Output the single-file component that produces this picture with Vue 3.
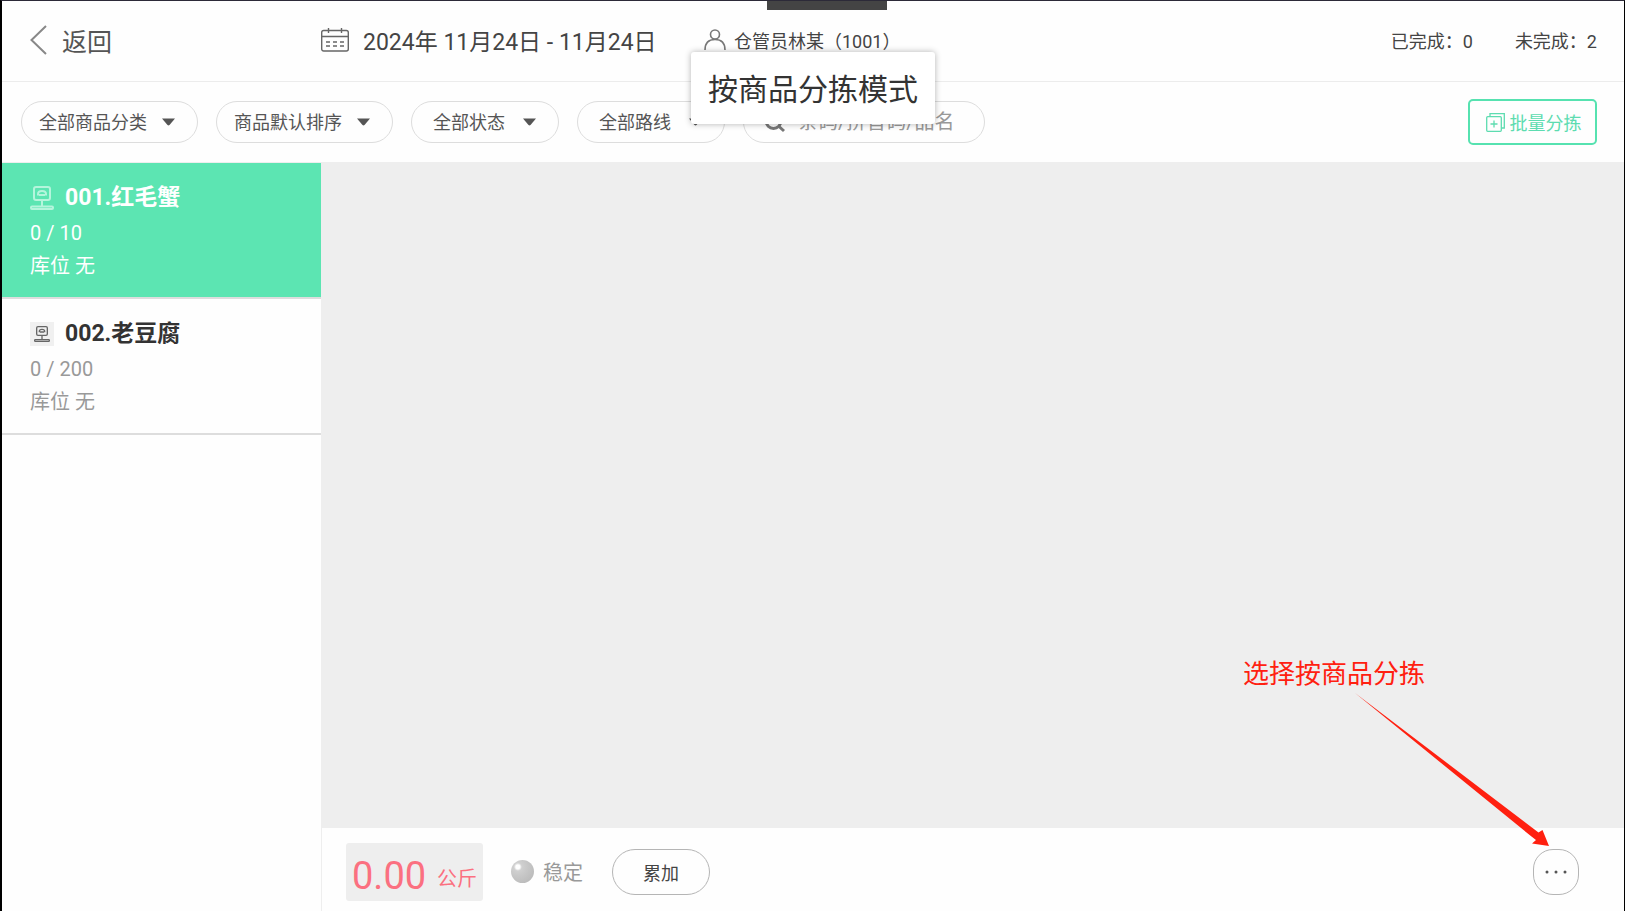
<template>
  <div class="sorting-page">
    <div class="notch"></div>

    <!-- 頂部資訊列 -->
    <header class="top-bar">
      <button class="back" type="button">
        <svg width="17" height="30" viewBox="0 0 17 30">
          <path d="M16 1 L1.5 15 L16 29" />
        </svg>
        <span>返回</span>
      </button>
      <button class="date" type="button">
        <svg width="28" height="24" viewBox="0 0 28 24">
          <rect x="0.7" y="2.5" width="26.6" height="20.5" rx="2" />
          <path d="M0.7 8.5 H27.3 M7.5 0 V5 M20.5 0 V5" />
          <path d="M5 14 H9 M12 14 H16 M19 14 H23 M5 18 H9 M12 18 H16 M19 18 H23" />
        </svg>
        <span>2024年 11月24日 - 11月24日</span>
      </button>
      <div class="user">
        <svg width="22" height="22" viewBox="0 0 22 22">
          <circle cx="11" cy="5.5" r="4.5" />
          <path d="M1 21 C1 14 5 10.5 11 10.5 C17 10.5 21 14 21 21" />
        </svg>
        <span>仓管员林某（1001）</span>
      </div>
      <div class="counts">
        <span>已完成：{{ doneCount }}</span>
        <span>未完成：{{ todoCount }}</span>
      </div>
    </header>

    <!-- 篩選列 -->
    <div class="filter-bar">
      <div v-for="f in filters" :key="f.id" class="filter" :class="{ short: f.short }">
        <select v-model="f.value" :aria-label="f.label">
          <option :value="f.label">{{ f.label }}</option>
        </select>
        <svg width="13" height="8" viewBox="0 0 13 8">
          <path d="M0 0.5 H13 L7.5 7 Q6.5 7.8 5.5 7 Z" />
        </svg>
      </div>
      <label class="search">
        <svg width="22" height="22" viewBox="0 0 22 22">
          <circle cx="9.5" cy="10" r="7.5" />
          <path d="M15 15.5 L20 20" />
        </svg>
        <input v-model="keyword" type="text" placeholder="条码/拼音码/品名" aria-label="搜索" />
      </label>
      <button class="batch" type="button">
        <svg width="19" height="19" viewBox="0 0 19 19">
          <rect x="0.7" y="3.7" width="14.6" height="14.6" rx="1" />
          <path d="M4 3.5 V0.7 H18.3 V15 H15.5 M8 7.5 V14.5 M4.5 11 H11.5" />
        </svg>
        <span>批量分拣</span>
      </button>
    </div>

    <div class="body">
      <!-- 商品列表 -->
      <aside class="product-list">
        <button
          v-for="p in products"
          :key="p.code"
          type="button"
          class="product"
          :class="{ active: p.code === currentCode }"
          @click="currentCode = p.code"
        >
          <span class="title">
            <span class="scale-icon">
              <svg viewBox="0 0 24 24">
                <rect x="4" y="1" width="16" height="13" rx="2" />
                <path class="dial" d="M8 9.5 V8 Q8 5 12 5 Q16 5 16 8 V9.5 M9 9 H15" />
                <path d="M12 14 V20" />
                <rect x="1" y="20.5" width="22" height="2.5" rx="1" />
              </svg>
            </span>
            <span>{{ p.code }}.{{ p.name }}</span>
          </span>
          <span class="line">{{ p.sorted }} / {{ p.total }}</span>
          <span class="line">库位 {{ p.location }}</span>
        </button>
      </aside>

      <div class="workspace">
        <main class="orders"></main>

        <!-- 電子秤 -->
        <footer class="scale-bar">
          <div class="weight">
            <span class="value">{{ weight }}</span>
            <span class="unit">公斤</span>
          </div>
          <div class="stable">
            <span class="ball"></span>
            <span>稳定</span>
          </div>
          <button class="add" type="button">累加</button>
          <button class="more" type="button" aria-label="更多">
            <svg width="24" height="4" viewBox="0 0 24 4">
              <circle cx="3" cy="2" r="1.5" />
              <circle cx="12" cy="2" r="1.5" />
              <circle cx="21" cy="2" r="1.5" />
            </svg>
          </button>
        </footer>
      </div>
    </div>

    <div class="mode-tip">按商品分拣模式</div>

    <!-- 操作提示 -->
    <div class="guide">
      <span>选择按商品分拣</span>
      <svg width="194" height="153" viewBox="0 0 194 153">
        <path d="M0 0 L183.5 139.5 L187.5 137 L194 153 L177 150.5 L181 147 L176.5 143.5 Z" />
      </svg>
    </div>
  </div>
</template>

<script setup>
import { ref } from "vue";

const doneCount = ref(0);
const todoCount = ref(2);
const keyword = ref("");
const weight = ref("0.00");
const currentCode = ref("001");

const filters = ref([
  { id: "category", label: "全部商品分类", value: "全部商品分类", short: false },
  { id: "sort", label: "商品默认排序", value: "商品默认排序", short: false },
  { id: "status", label: "全部状态", value: "全部状态", short: true },
  { id: "route", label: "全部路线", value: "全部路线", short: true },
]);

const products = ref([
  { code: "001", name: "红毛蟹", sorted: 0, total: 10, location: "无" },
  { code: "002", name: "老豆腐", sorted: 0, total: 200, location: "无" },
]);
</script>

<style>
body {
  margin: 0;
}
</style>

<style scoped>
.sorting-page {
  position: relative;
  display: flex;
  flex-direction: column;
  box-sizing: border-box;
  height: 100vh;
  overflow: hidden;
  border: solid #000;
  border-width: 1px 1px 0 2px;
  border-top-color: #2c2a38;
  background: #fefefe;
  color: #444;
  font-family: Roboto, "Noto Sans CJK SC", sans-serif;
  font-size: 18px;
}

button,
select,
input {
  margin: 0;
  padding: 0;
  border: none;
  background: none;
  color: inherit;
  font: inherit;
}

button {
  cursor: pointer;
}

svg {
  display: block;
  flex: none;
  fill: none;
  stroke: currentColor;
}

.notch {
  position: absolute;
  top: 0;
  left: 50%;
  width: 120px;
  height: 9px;
  margin-left: -46px;
  background: #444;
}

/* 頂部資訊列 */
.top-bar {
  display: flex;
  align-items: center;
  flex: none;
  box-sizing: border-box;
  height: 81px;
  padding: 0 27px 2px 28px;
  border-bottom: 1px solid #ececec;
}

.back {
  display: flex;
  align-items: center;
  gap: 15px;
  width: 291px;
  color: #555;
  font-size: 25px;
}

.back svg {
  color: #888;
  stroke-width: 2;
}

.date {
  display: flex;
  align-items: center;
  gap: 14px;
  width: 383px;
  font-size: 23px;
  white-space: nowrap;
}

.date svg {
  color: #666;
  stroke-width: 1.4;
}

.user {
  display: flex;
  align-items: center;
  gap: 8px;
}

.user svg {
  color: #777;
  stroke-width: 1.6;
}

.counts {
  display: flex;
  gap: 42px;
  margin-left: auto;
}

/* 篩選列 */
.filter-bar {
  display: flex;
  align-items: center;
  flex: none;
  gap: 18px;
  height: 80px;
  padding: 0 27px 0 19px;
  border-bottom: 1px solid #eee;
}

.filter {
  position: relative;
  display: flex;
  align-items: center;
  width: 177px;
  color: #555;
}

.filter.short {
  width: 148px;
}

.filter select {
  box-sizing: border-box;
  width: 100%;
  height: 42px;
  padding: 0 40px 0 17px;
  border: 1px solid #ddd;
  border-radius: 21px;
  appearance: none;
}

.filter.short select {
  padding-left: 21px;
}

.filter svg {
  position: absolute;
  right: 23px;
  fill: #555;
  stroke: none;
  pointer-events: none;
}

.search {
  display: flex;
  align-items: center;
  gap: 12px;
  box-sizing: border-box;
  width: 242px;
  height: 42px;
  padding: 0 20px;
  border: 1px solid #ddd;
  border-radius: 21px;
  color: #777;
  font-size: 20px;
}

.search svg {
  stroke-width: 3;
}

.search input {
  flex: 1;
  min-width: 0;
  outline: none;
}

.search input::placeholder {
  color: #999;
}

.batch {
  display: flex;
  align-items: center;
  justify-content: center;
  gap: 5px;
  box-sizing: border-box;
  width: 129px;
  height: 46px;
  padding-left: 2px;
  margin-left: auto;
  border: 2px solid #56e2b0;
  border-radius: 5px;
  color: #5ddcb0;
}

.batch svg {
  stroke-width: 1.3;
}

.body {
  display: flex;
  flex: 1;
  min-height: 0;
}

/* 商品列表 */
.product-list {
  display: flex;
  flex-direction: column;
  flex: none;
  width: 319px;
}

.product {
  display: flex;
  flex-direction: column;
  height: 136px;
  padding: 17px 28px 12px;
  box-sizing: border-box;
  border-bottom: 2px solid #ddd;
  color: #999;
  text-align: left;
}

.product.active {
  background: #5ce5b2;
  color: #fff;
}

.title {
  display: flex;
  align-items: center;
  gap: 11px;
  margin-bottom: 1px;
  color: #333;
  font-size: 23px;
  font-weight: bold;
  line-height: 36px;
}

.active .title {
  color: #fff;
}

.scale-icon {
  box-sizing: border-box;
  width: 24px;
  height: 24px;
  padding: 4px;
  background: #f0f0f0;
  color: #666;
}

.scale-icon svg {
  stroke-width: 2;
}

.active .scale-icon {
  padding: 0;
  background: none;
  color: #b5f5dc;
}

.line {
  font-size: 20px;
  line-height: 33px;
}

.workspace {
  display: flex;
  flex-direction: column;
  flex: 1;
  min-width: 0;
}

.orders {
  flex: 1;
  background: #eee;
}

/* 電子秤 */
.scale-bar {
  display: flex;
  align-items: center;
  flex: none;
  box-sizing: border-box;
  height: 83px;
  padding: 4px 45px 0 24px;
  border-left: 1px solid #eee;
}

.weight {
  display: flex;
  align-items: flex-start;
  justify-content: space-between;
  box-sizing: border-box;
  width: 137px;
  height: 58px;
  padding: 0 6px;
  border-radius: 3px;
  background: #eee;
  color: #fb7080;
}

.weight .value {
  font-size: 38px;
  line-height: 66px;
}

.weight .unit {
  font-size: 20px;
  line-height: 72px;
}

.stable {
  display: flex;
  align-items: center;
  gap: 9px;
  margin: 0 29px 0 28px;
  color: #999;
  font-size: 20px;
}

.ball {
  width: 23px;
  height: 23px;
  border-radius: 50%;
  background: radial-gradient(circle at 30% 30%, #fff 0, #fff 2px, #d0d0d0 4px, #c8c8c8 9px, #bbb 18px);
}

.add {
  box-sizing: border-box;
  width: 98px;
  height: 46px;
  border: 1px solid #b5b5b5;
  border-radius: 23px;
}

.more {
  display: flex;
  align-items: center;
  justify-content: center;
  box-sizing: border-box;
  width: 46px;
  height: 46px;
  margin-left: auto;
  border: 1px solid #b5b5b5;
  border-radius: 20px;
}

.more svg {
  fill: #555;
  stroke: none;
}

/* 模式提示 */
.mode-tip {
  position: absolute;
  top: 51px;
  left: 50%;
  padding: 3px 17px 0;
  border-radius: 3px;
  background: #fff;
  box-shadow: 0 0 6px rgba(0, 0, 0, 0.3);
  color: #333;
  font-size: 30px;
  line-height: 69px;
  white-space: nowrap;
  transform: translateX(-50%);
}

.guide {
  position: absolute;
  right: 75px;
  bottom: 65px;
  display: flex;
  flex-direction: column;
  width: 306px;
  color: #ff2010;
  font-size: 26px;
  line-height: 38px;
  pointer-events: none;
}

.guide svg {
  align-self: flex-end;
  fill: currentColor;
  stroke: none;
}
</style>
